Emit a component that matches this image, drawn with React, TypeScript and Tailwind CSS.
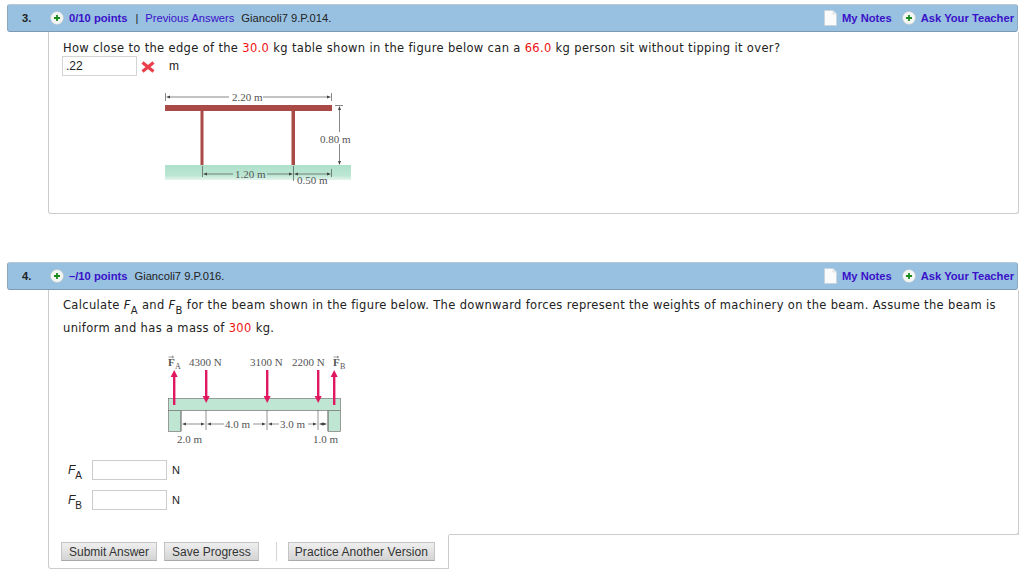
import React from 'react';

const FONT_UI = 'font-["Liberation_Sans",Arial,sans-serif]';

const PlusIcon = () => (
  <svg width="14" height="14" viewBox="0 0 14 14" className="shrink-0">
    <circle cx="7" cy="7" r="6.5" fill="#f4f6f4" stroke="#b8c4cc" strokeWidth="0.6" />
    <path d="M7 4v6M4 7h6" stroke="#1d8a1d" strokeWidth="1.800" />
  </svg>
);

const NoteIcon = () => (
  <svg width="13" height="16" viewBox="0 0 13 16" className="shrink-0">
    <path d="M0.5 0.5h8.500l3.500 3.500v11.500h-12z" fill="#fbfbfb" stroke="#c9d3da" strokeWidth="0.7" />
    <path d="M9 0.5v3.500h3.500" fill="#e8ecef" stroke="#c9d3da" strokeWidth="0.5" />
  </svg>
);

const Sub = ({ children }: { children: React.ReactNode }) => (
  <sub className="align-[-2px] text-[10px] not-italic leading-none">{children}</sub>
);

const Red = ({ children }: { children: React.ReactNode }) => (
  <span className="text-[#ee1111]">{children}</span>
);

const QuestionHeader = ({ num, children }: { num: string; children: React.ReactNode }) => (
  <div className={`ml-[7px] flex h-[28px] w-[1011px] items-center rounded-[3px] border border-[#8aa8c0] border-t-[#b4c8d8] border-b-[#7d9ab2] bg-[#98c1e1] text-[11.200px] text-[#222] ${FONT_UI}`}>
    <span className="ml-[14px] w-[28px] font-bold">{num}</span>
    <PlusIcon />
    {children}
    <div className="ml-auto mr-[3px] flex items-center font-bold text-[#3a10c8]">
      <NoteIcon />
      <span className="ml-[5px]">My Notes</span>
      <span className="ml-[10px]"><PlusIcon /></span>
      <span className="ml-[5px]">Ask Your Teacher</span>
    </div>
  </div>
);

const TableFigure = () => (
  <svg width="190" height="100" viewBox="0 0 190 100" className="block" fontFamily="'Liberation Serif', serif" fontSize="11" fill="#555">
    <defs>
      <linearGradient id="ground" x1="0" y1="0" x2="0" y2="1">
        <stop offset="0" stopColor="#aee0ca" />
        <stop offset="0.7" stopColor="#bce6d4" />
        <stop offset="1" stopColor="#e4f5ee" />
      </linearGradient>
    </defs>
    <rect x="1" y="75" width="186" height="15" fill="url(#ground)" />
    <rect x="1" y="15" width="167" height="6" fill="#aa4a46" />
    <rect x="36.500" y="21" width="3" height="54" fill="#aa4a46" />
    <rect x="127.500" y="21" width="3.500" height="54" fill="#aa4a46" />
    <path d="M1.500 3v8M167.500 3v8M5 7h60M99 7h65" stroke="#555" strokeWidth="0.7" />
    <path d="M2 7l4-1.500v3zM167 7l-4-1.500v3z" fill="#444" />
    <text x="68" y="11">2.20 m</text>
    <path d="M171 15.500h8M175.500 17v25M175.500 54v20" stroke="#555" strokeWidth="0.7" />
    <path d="M175.500 16l-1.500 4h3zM175.500 75l-1.500-4h3z" fill="#444" />
    <text x="156" y="53">0.80 m</text>
    <path d="M38.500 76v11M129.500 76v15M167.500 79v8M42 84h27M103 84h24M133 84h32" stroke="#555" strokeWidth="0.7" />
    <path d="M39 84l4-1.500v3zM129 84l-4-1.500v3zM130 84l4-1.500v3zM167 84l-4-1.500v3z" fill="#444" />
    <text x="71" y="88">1.20 m</text>
    <text x="133" y="94">0.50 m</text>
  </svg>
);

const Arrow = ({ x, up }: { x: number; up?: boolean }) =>
  up ? (
    <g fill="#e0185f">
      <rect x={x - 1} y="24" width="2.400" height="29" />
      <path d={`M${x + 0.2} 18l-3.500 7h7z`} />
    </g>
  ) : (
    <g fill="#e0185f">
      <rect x={x - 1} y="18" width="2.400" height="28" />
      <path d={`M${x + 0.2} 51l-3.500-7h7z`} />
    </g>
  );

const BeamFigure = () => (
  <svg width="182" height="95" viewBox="0 0 182 95" className="block" fontFamily="'Liberation Serif', serif" fontSize="11" fill="#555">
    <rect x="3.500" y="46.500" width="172" height="12" fill="#bfe5d3" stroke="#777" strokeWidth="0.7" />
    <rect x="3.500" y="58.500" width="12.500" height="21" fill="#bfe5d3" stroke="#777" strokeWidth="0.7" />
    <rect x="163" y="58.500" width="12.500" height="21" fill="#bfe5d3" stroke="#777" strokeWidth="0.7" />
    <Arrow x={9} up />
    <Arrow x={41} />
    <Arrow x={102} />
    <Arrow x={153} />
    <Arrow x={169} up />
    <text x="3" y="14" fontWeight="bold">F</text>
    <text x="10" y="16.500" fontSize="8">A</text>
    <path d="M3.500 5h5M7 3.800l1.500 1.200-1.500 1.200" stroke="#555" strokeWidth="0.6" fill="none" />
    <text x="24" y="14">4300 N</text>
    <text x="85" y="14">3100 N</text>
    <text x="127" y="14">2200 N</text>
    <text x="168" y="14" fontWeight="bold">F</text>
    <text x="175" y="16.500" fontSize="8">B</text>
    <path d="M168.500 5h5M172 3.800l1.500 1.200-1.500 1.200" stroke="#555" strokeWidth="0.6" fill="none" />
    <path d="M16 59v20M41 58v20M102 58v20M153 58v20M163 59v20M20 72h18M45 72h14M88 72h11M106 72h8M143 72h7M157 72h3" stroke="#666" strokeWidth="0.7" />
    <path d="M17 72l4-1.500v3zM40 72l-4-1.500v3zM42 72l4-1.500v3zM101 72l-4-1.500v3zM103 72l4-1.500v3zM152 72l-4-1.500v3zM154 72l4-1.500v3zM162 72l-4-1.500v3z" fill="#444" />
    <text x="60" y="76">4.0 m</text>
    <text x="115" y="76">3.0 m</text>
    <text x="12" y="91">2.0 m</text>
    <text x="148" y="91">1.0 m</text>
  </svg>
);

const AnswerRow = ({ label }: { label: string }) => (
  <div className="flex h-[20px] items-center">
    <span className={`w-[24px] text-[12px] italic text-[#222] ${FONT_UI}`}>
      F<Sub>{label}</Sub>
    </span>
    <div className="h-[20px] w-[75px] border border-[#cccccc] bg-white" />
    <span className={`ml-[5px] text-[11px] text-[#222] ${FONT_UI}`}>N</span>
  </div>
);

const Btn = ({ children, className = '' }: { children: React.ReactNode; className?: string }) => (
  <div className={`flex h-[19px] items-center border border-[#c4c4c4] border-b-[#aaa] bg-gradient-to-b from-[#efefef] to-[#d4d4d4] text-[12px] text-[#333] ${FONT_UI} ${className}`}>
    {children}
  </div>
);

export default function App() {
  return (
    <div className="h-[584px] w-[1024px] overflow-hidden bg-white pt-[4px] font-['DejaVu_Sans',sans-serif] text-[11.500px] text-[#222]">
      {/* 문제 3 */}
      <QuestionHeader num="3.">
        <span className="ml-[5px] font-bold text-[#3a10c8]">0/10 points</span>
        <span className="ml-[8px]">|</span>
        <span className="ml-[7px] text-[#3a10c8]">Previous Answers</span>
        <span className="ml-[7px]">Giancoli7 9.P.014.</span>
      </QuestionHeader>
      <div className="ml-[48px] h-[182px] w-[971px] rounded-b-[3px] border-x border-b border-[#cccccc] pl-[14px] pt-[9px]">
        <p className="leading-[15px] tracking-[0.34px]">
          How close to the edge of the <Red>30.0</Red> kg table shown in the figure below can a <Red>66.0</Red> kg person sit without tipping it over?
        </p>
        <div className="-ml-px flex h-[20px] items-center">
          <div className={`flex h-[20px] w-[75px] items-center border border-[#d4d4d4] pl-[3px] text-[12px] ${FONT_UI}`}>.22</div>
          <svg width="14" height="12" viewBox="0 0 14 12" className="ml-[4px] mt-[2px]">
            <path d="M1.500 1.500l11 9M12.500 1.500l-11 9" stroke="#e8404a" strokeWidth="3.200" />
          </svg>
          <span className={`ml-[14px] text-[12px] ${FONT_UI}`}>m</span>
        </div>
        <div className="ml-[101px] mt-[14px]">
          <TableFigure />
        </div>
      </div>

      {/* 문제 4 */}
      <div className="mt-[48px]">
        <QuestionHeader num="4.">
          <span className="ml-[5px] font-bold text-[#3a10c8]">–/10 points</span>
          <span className="ml-[7px]">Giancoli7 9.P.016.</span>
        </QuestionHeader>
      </div>
      <div className="ml-[48px] h-[245px] w-[971px] border-x border-[#cccccc] pl-[14px] pt-[4px]">
        <p className="w-[945px] leading-[23px] tracking-[0.34px]">
          Calculate <i>F</i><Sub>A</Sub> and <i>F</i><Sub>B</Sub> for the beam shown in the figure below. The downward forces represent the weights of machinery on the beam. Assume the beam is uniform and has a mass of <Red>300</Red> kg.
        </p>
        <div className="ml-[102px] mt-[12px]">
          <BeamFigure />
        </div>
        <div className="ml-[5px] mt-[13px] flex flex-col gap-[10px]">
          <AnswerRow label="A" />
          <AnswerRow label="B" />
        </div>
      </div>
      <div className="ml-[48px] flex w-[971px]">
        <div className="flex h-[34px] w-[401px] items-start rounded-bl-[3px] border-x border-b border-[#cccccc] pl-[12px] pt-[7px]">
          <Btn className="px-[7px]">Submit Answer</Btn>
          <Btn className="ml-[7px] px-[7px]">Save Progress</Btn>
          <div className="ml-[17px] h-[19px] w-px bg-[#d4d4d4]" />
          <Btn className="ml-[11px] px-[6px] tracking-[0.08px]">Practice Another Version</Btn>
        </div>
        <div className="mt-[-3px] h-[3px] flex-1 rounded-br-[3px] border-b border-r border-[#cccccc]" />
      </div>
    </div>
  );
}
